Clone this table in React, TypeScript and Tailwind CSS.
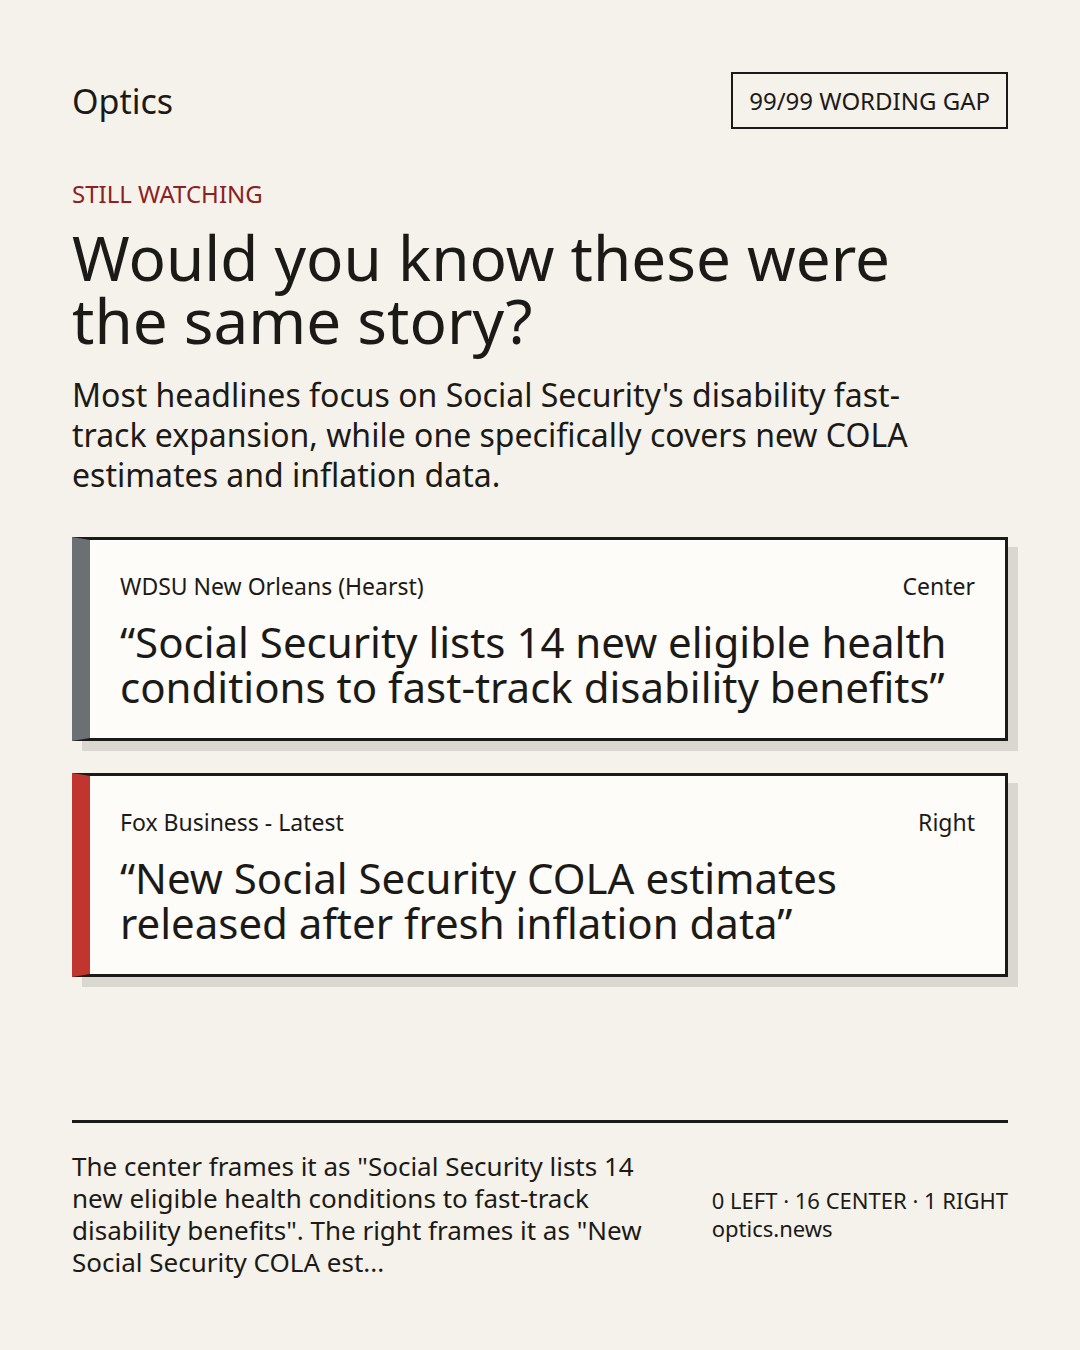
import React from "react";

const cards = [
  {
    source: "WDSU New Orleans (Hearst)",
    lean: "Center",
    bar: "border-l-[#6b7075]",
    headline: "\u201cSocial Security lists 14 new eligible health conditions to fast-track disability benefits\u201d",
  },
  {
    source: "Fox Business - Latest",
    lean: "Right",
    bar: "border-l-[#c0362f]",
    headline: "\u201cNew Social Security COLA estimates released after fresh inflation data\u201d",
  },
];

export default function App() {
  return (
    <div
      className="min-h-[1350px] w-[1080px] bg-[#f5f1eb] text-[#1c1a17] flex flex-col px-[72px] pt-[72px] pb-[72px]"
      style={{ fontFamily: '"Noto Sans", "Open Sans", sans-serif' }}
    >
      <header className="flex items-center justify-between">
        <div className="text-[34px] leading-[40px]">Optics</div>
        <div className="border-2 border-[#1c1a17] px-4 py-3 text-[24px] leading-[29px]">99/99 WORDING GAP</div>
      </header>

      <div className="mt-[49px] text-[24px] leading-[32px] text-[#8b2121]">STILL WATCHING</div>
      <h1 className="mt-[16px] text-[62px] leading-[63px] font-normal">
        Would you know these were
        <br />
        the same story?
      </h1>
      <p className="mt-[23px] text-[32px] leading-[40px] max-w-[850px]">
        Most headlines focus on Social Security's disability fast-track expansion, while one specifically covers new COLA estimates and inflation data.
      </p>

      <div className="mt-[42px] flex flex-col gap-8">
        {cards.map((c) => (
          <div
            key={c.source}
            className={`bg-[#fdfcf8] border-[3px] border-[#1c1a17] border-l-[18px] ${c.bar} shadow-[10px_10px_0_#dad7d0] pl-[30px] pr-[30px] pt-[31px] pb-[29px]`}
          >
            <div className="flex items-center justify-between text-[23px] leading-[30px]">
              <span>{c.source}</span>
              <span>{c.lean}</span>
            </div>
            <div className="mt-[18px] text-[42px] leading-[45px]">{c.headline}</div>
          </div>
        ))}
      </div>

      <footer className="mt-auto border-t-[3px] border-[#1c1a17] pt-[27px] flex items-center gap-16">
        <p className="flex-1 text-[26px] leading-[32px]">
          The center frames it as "Social Security lists 14 new eligible health conditions to fast-track disability benefits". The right frames it as "New Social Security COLA est...
        </p>
        <div className="shrink-0 text-[22px] leading-[28px]">
          <div>0 LEFT · 16 CENTER · 1 RIGHT</div>
          <div>optics.news</div>
        </div>
      </footer>
    </div>
  );
}
